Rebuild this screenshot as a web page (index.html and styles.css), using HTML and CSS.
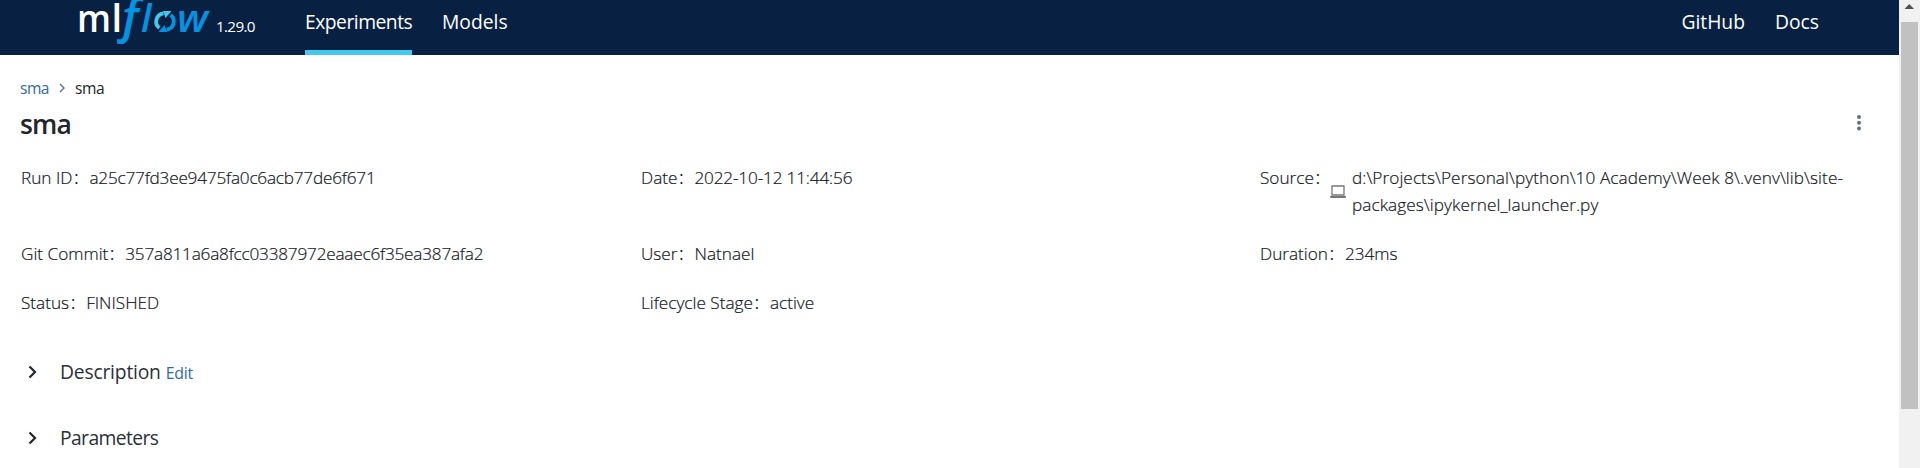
FILE: index.html
```html
<!DOCTYPE html>
<html lang="en">
<head>
<meta charset="utf-8">
<title>sma - MLflow</title>
<link rel="stylesheet" href="styles.css">
</head>
<body>
<div class="page">
  <header class="topbar">
    <div class="brand">
      <svg class="logo" width="134" height="50" viewBox="0 0 134 50" role="img">
        <text class="logo-ml" x="-2" y="32" textLength="34" lengthAdjust="spacingAndGlyphs">m</text>
        <text class="logo-ml" x="32.500" y="32">l</text>
        <text class="logo-f" x="38.500" y="32">ƒ</text>
        <text class="logo-w" x="62" y="32">l</text>
        <g fill="none" stroke-width="3.800">
          <path stroke="#43c9ed" d="M80.300 28A8.300 8.300 0 0 1 84.500 13.300"/>
          <path stroke="#0194e2" d="M91.700 15A8.300 8.300 0 0 1 87.500 29.700"/>
        </g>
        <path fill="#43c9ed" d="M84 11h8.500l-6 7z"/>
        <path fill="#0194e2" d="M88 32h-8.500l6-7z"/>
        <text class="logo-w" x="98" y="32" textLength="31" lengthAdjust="spacingAndGlyphs">w</text>
      </svg>
      <span class="version">1.29.0</span>
    </div>
    <nav class="nav"><a class="link active">Experiments</a><a class="link">Models</a></nav>
    <nav class="nav external"><a class="link">GitHub</a><a class="link">Docs</a></nav>
  </header>
  <main class="content">
    <div class="crumbs"><a class="blue">sma</a><svg width="8" height="10" viewBox="0 0 8 10"><path d="M2 1l4 4-4 4" fill="none" stroke="#5f7281" stroke-width="1.400"/></svg><span>sma</span></div>
    <div class="heading"><h1>sma</h1><svg class="kebab" width="6" height="18" viewBox="0 0 6 18"><circle cx="3" cy="3" r="2"/><circle cx="3" cy="8.800" r="2"/><circle cx="3" cy="14.600" r="2"/></svg></div>
    <dl class="meta">
      <div class="item"><dt>Run ID<i>：</i></dt><dd class="hash">a25c77fd3ee9475fa0c6acb77de6f671</dd></div>
      <div class="item"><dt>Date<i>：</i></dt><dd class="date">2022-10-12 11:44:56</dd></div>
      <div class="item"><dt>Source<i>：</i></dt><dd class="source"><svg class="laptop" width="16" height="14" viewBox="0 0 16 14"><path d="M2 1h12v9H2z" fill="none" stroke="#777" stroke-width="1.300"/><path d="M0 11h16v1.200l-1 .8H1l-1-.8z" fill="#777"/></svg><span>d:\Projects\Personal\python\10 Academy\Week 8\.venv\lib\site-<br>packages\ipykernel_launcher.py</span></dd></div>
      <div class="item"><dt>Git Commit<i>：</i></dt><dd class="hash">357a811a6a8fcc03387972eaaec6f35ea387afa2</dd></div>
      <div class="item"><dt>User<i>：</i></dt><dd>Natnael</dd></div>
      <div class="item"><dt>Duration<i>：</i></dt><dd>234ms</dd></div>
      <div class="item"><dt>Status<i>：</i></dt><dd>FINISHED</dd></div>
      <div class="item"><dt>Lifecycle Stage<i>：</i></dt><dd>active</dd></div>
    </dl>
    <section class="panel"><svg class="chevron" width="9" height="14" viewBox="0 0 9 14"><path d="M1.500 1.500L7 7l-5.500 5.500"/></svg><h2>Description</h2><a class="blue edit">Edit</a></section>
    <section class="panel"><svg class="chevron" width="9" height="14" viewBox="0 0 9 14"><path d="M1.500 1.500L7 7l-5.500 5.500"/></svg><h2 class="tight">Parameters</h2></section>
  </main>
</div>
<aside class="scrollbar"><svg width="21" height="22" viewBox="0 0 21 22"><path d="M5.500 9h9.500l-4.750-5z" fill="#505050"/></svg><div class="thumb"></div></aside>
</body>
</html>
```

FILE: styles.css
```css
* { box-sizing: border-box; }
body { margin: 0; height: 468px; overflow: hidden; display: flex; background: #fff; color: #20262b; font-family: "Segoe UI", "Open Sans", "Noto Sans", sans-serif; }
.page { flex: 1; min-width: 0; }
.topbar { height: 55px; background: #082142; display: flex; color: #fff; }
.brand { width: 305px; padding-left: 79px; display: flex; }
.logo { display: block; flex: none; overflow: visible; }
.logo-ml { font: 600 38px "Open Sans", sans-serif; fill: #fff; }
.logo-f { font: italic 600 48px "Open Sans", sans-serif; fill: #0194e2; }
.logo-w { font: italic 600 38px "Open Sans", sans-serif; fill: #0194e2; }
.version { margin-left: 3px; font-size: 15.2px; line-height: 22px; padding-top: 15px; letter-spacing: -0.65px; }
.nav { display: flex; gap: 30px; }
.external { margin-left: auto; padding-right: 80px; }
.link { height: 55px; font-size: 19.3px; line-height: 27px; padding-top: 8px; white-space: nowrap; }
.active { width: 107px; border-bottom: 5px solid #43c9ed; letter-spacing: -0.5px; }
.content { padding: 21px 20px 0; }
.crumbs { display: flex; align-items: center; height: 24px; font-size: 15.6px; line-height: 24px; letter-spacing: -0.5px; }
.crumbs svg { margin: 0 9px 0 9px; }
.blue { color: #2e6aa8; }
.heading { display: flex; justify-content: space-between; height: 46px; padding-top: 6px; }
h1 { margin: 0; font-size: 26.5px; line-height: 36px; font-weight: 600; letter-spacing: -0.8px; }
.kebab { fill: #5f7281; margin: 8px 17px 0 0; }
.meta { margin: 0 0 0 1px; display: grid; grid-template-columns: 620px 619px 1fr; grid-template-rows: 76px 49px 69px; padding-top: 18px; font-size: 17.2px; line-height: 27px; font-weight: 300; color: #14181c; -webkit-text-stroke: 0.2px #14181c; }
.item { display: flex; white-space: nowrap; }
dt, dd { margin: 0; }
dt i { font-style: normal; font-family: "Noto Sans CJK SC", sans-serif; font-size: 15.5px; display: inline-block; width: 17px; line-height: 20px; -webkit-text-stroke: 0; }
.hash { letter-spacing: -0.22px; }
.date { letter-spacing: -0.17px; }
.source { display: flex; letter-spacing: 0.08px; }
.laptop { margin: 21px 6px 0 -1px; }
.panel { display: flex; height: 66px; align-items: baseline; font-size: 20px; line-height: 28px; }
.chevron { margin: 0 23px 0 8px; fill: none; stroke: #20262b; stroke-width: 2.2; }
h2 { margin: 0; font-size: 19.3px; font-weight: 400; color: #2b3136; letter-spacing: -0.2px; }
.tight { letter-spacing: -0.6px; }
.edit { font-size: 15.8px; margin-left: 5px; letter-spacing: -0.2px; }
.scrollbar { width: 21px; flex: none; background: #f1f1f1; }
.scrollbar svg { display: block; }
.thumb { width: 17px; height: 387px; margin-left: 2px; background: #c1c1c1; }
```
